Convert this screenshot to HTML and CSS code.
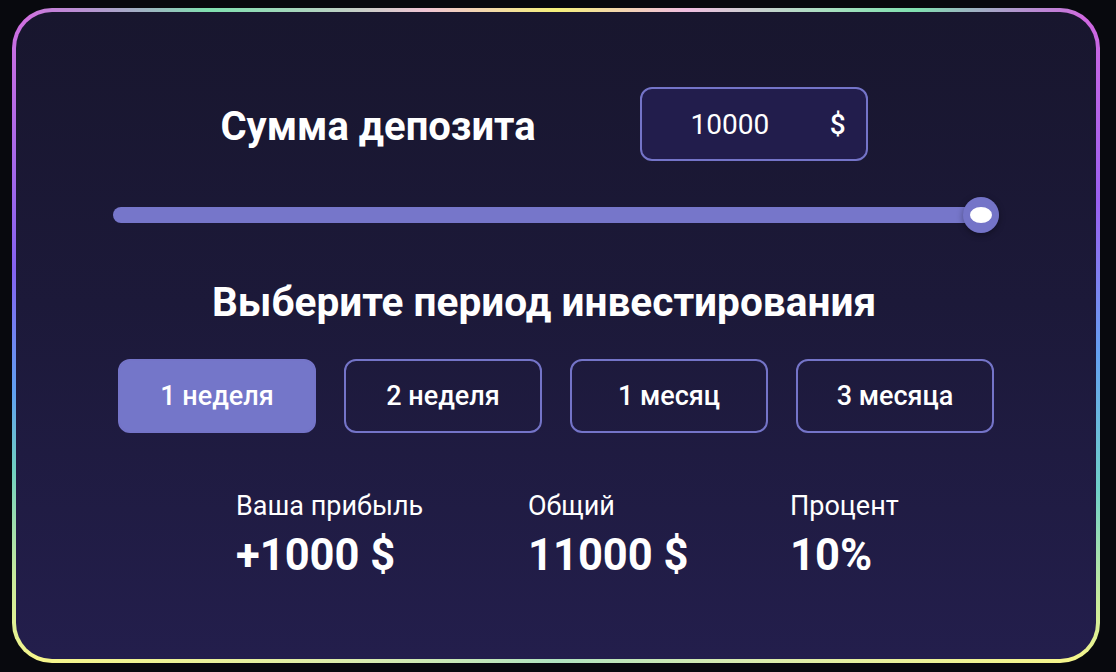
FILE: index.html
```html
<!DOCTYPE html>
<html lang="ru">
<head>
<meta charset="utf-8">
<title>Калькулятор депозита</title>
<link rel="stylesheet" href="styles.css">
</head>
<body>
<div class="frame">
  <div class="card">
    <div class="head-row">
      <h2 class="title">Сумма депозита</h2>
      <div class="amount">
        <span class="amount-value">10000</span>
        <span class="amount-cur">$</span>
      </div>
    </div>
    <div class="slider">
      <div class="track"></div>
      <div class="thumb"><span class="thumb-dot"></span></div>
    </div>
    <h2 class="title title-period">Выберите период инвестирования</h2>
    <div class="periods">
      <button class="period active">1 неделя</button>
      <button class="period">2 неделя</button>
      <button class="period">1 месяц</button>
      <button class="period">3 месяца</button>
    </div>
    <div class="stats">
      <div class="stat stat-profit">
        <div class="stat-label">Ваша прибыль</div>
        <div class="stat-value">+1000 $</div>
      </div>
      <div class="stat stat-total">
        <div class="stat-label">Общий</div>
        <div class="stat-value">11000 $</div>
      </div>
      <div class="stat">
        <div class="stat-label">Процент</div>
        <div class="stat-value">10%</div>
      </div>
    </div>
  </div>
</div>
</body>
</html>
```

FILE: styles.css
```css
* { box-sizing: border-box; }
html, body { margin: 0; padding: 0; }
body {
  width: 1116px;
  height: 672px;
  background: #08090e;
  font-family: Roboto, "Noto Sans", "Liberation Sans", sans-serif;
  color: #ffffff;
  overflow: hidden;
  padding: 8px 16px 9px 12px;
}
.frame {
  height: 655px;
  border-radius: 40px;
  padding: 4px;
  background: conic-gradient(from 0deg at 50% 50%,
    #f5f07a 0deg, #f0bde0 22deg, #a8e0c0 40deg, #80e0b0 48deg, #d068e0 59deg,
    #9a60f0 76deg, #64a0f0 92deg, #70d0c8 106deg, #c8ea9c 116deg, #f6f68c 122deg,
    #d8ecb0 150deg, #b0e4c0 180deg, #d8ecb0 210deg, #f6f68c 238deg,
    #c8ea9c 246deg, #70d0c0 256deg, #60a0f0 264deg, #8462f0 277deg,
    #d070e0 301deg, #80e0b0 313deg, #f0c4d4 338deg, #f5f07a 360deg);
}
.card {
  height: 100%;
  border-radius: 36px;
  background: linear-gradient(180deg, #18162e 0%, #1c1939 45%, #231e4c 100%);
  padding-top: 75px;
  display: flex;
  flex-direction: column;
  align-items: center;
}
.head-row {
  display: flex;
  align-items: center;
  gap: 104px;
  padding-right: 24px;
}
.title {
  margin: 0;
  font-size: 40px;
  line-height: 48px;
  font-weight: 700;
  color: #ffffff;
}
.head-row .title {
  padding-top: 6px;
}
.amount {
  width: 228px;
  height: 74px;
  border: 2px solid #7474c8;
  border-radius: 12px;
  background: #221d4c;
  display: flex;
  align-items: center;
  padding: 0 20px 0 49px;
}
.amount-value {
  font-size: 28px;
  font-weight: 400;
}
.amount-cur {
  margin-left: auto;
  font-size: 28px;
  font-weight: 500;
}
.slider {
  position: relative;
  width: 886px;
  height: 36px;
  margin-top: 36px;
  display: flex;
  align-items: center;
}
.track {
  width: 100%;
  height: 16px;
  border-radius: 8px;
  background: #7676ca;
}
.thumb {
  position: absolute;
  right: 0;
  top: 0;
  width: 36px;
  height: 36px;
  border-radius: 50%;
  background: #7474c8;
  box-shadow: 0 2px 6px rgba(0, 0, 0, 0.35);
  display: flex;
  align-items: center;
  justify-content: center;
}
.thumb-dot {
  width: 22px;
  height: 16px;
  border-radius: 50%;
  background: #ffffff;
}
.title-period {
  margin-top: 45px;
  font-size: 40.6px;
  padding-right: 24px;
}
.periods {
  display: flex;
  gap: 28px;
  margin-top: 33px;
}
.period {
  width: 198px;
  height: 74px;
  border: 2px solid #7474c8;
  border-radius: 12px;
  background: transparent;
  color: #ffffff;
  font-family: inherit;
  font-size: 27px;
  font-weight: 500;
  padding: 0;
}
.period.active {
  background: #7476c9;
}
.stats {
  align-self: flex-start;
  display: flex;
  margin-top: 57px;
  margin-left: 220px;
}
.stat-profit { width: 292px; }
.stat-total { width: 262px; }
.stat-label {
  font-size: 27px;
  line-height: 32px;
}
.stat-value {
  font-size: 43.5px;
  line-height: 50px;
  font-weight: 700;
  margin-top: 9px;
}
```
